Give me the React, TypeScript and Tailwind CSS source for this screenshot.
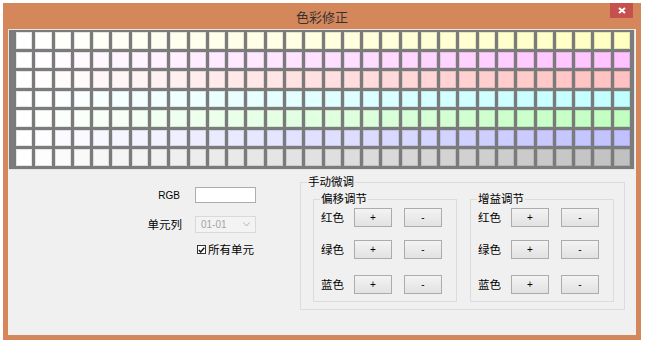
import React from 'react';

const cjk = "font-['Noto_Sans_CJK_SC','Microsoft_YaHei',sans-serif]";

// each row fades from white towards its tint, 2 steps per column
const rowTints: ((v: number) => string)[] = [
  (v) => `rgb(255,255,${v})`,
  (v) => `rgb(255,${v},255)`,
  (v) => `rgb(255,${v},${v})`,
  (v) => `rgb(${v},255,255)`,
  (v) => `rgb(${v},255,${v})`,
  (v) => `rgb(${v},${v},255)`,
  (v) => `rgb(${v},${v},${v})`,
];

const COLS = 32;

const AdjButton: React.FC<{ label: string; className?: string }> = ({ label, className = '' }) => (
  <button
    className={`h-[19px] w-[38px] border border-[#acacac] bg-linear-to-b from-[#f3f3f3] to-[#e2e2e2] text-[10px] leading-none text-black font-['Liberation_Sans',sans-serif] ${className}`}
  >
    {label}
  </button>
);

const GroupBox: React.FC<{ title: string; className?: string; children?: React.ReactNode }> = ({
  title,
  className = '',
  children,
}) => (
  <div className={`relative border border-[#dcdcdc] ${className}`}>
    <span className="absolute -top-[9px] left-[6px] bg-[#f0f0f0] px-px text-[11.5px] leading-[15px] text-black">
      {title}
    </span>
    {children}
  </div>
);

const AdjGroup: React.FC<{ title: string; className?: string }> = ({ title, className = '' }) => (
  <GroupBox title={title} className={`h-[103px] w-[144px] pl-[7px] pt-[8px] ${className}`}>
    {[
      { name: '红色', mt: '' },
      { name: '绿色', mt: 'mt-[13px]' },
      { name: '蓝色', mt: 'mt-[16px]' },
    ].map((row) => (
      <div key={row.name} className={`flex items-center ${row.mt}`}>
        <span className="w-[33px] text-[11.5px] leading-[15px] text-black">{row.name}</span>
        <AdjButton label="+" />
        <AdjButton label="-" className="ml-[12px]" />
      </div>
    ))}
  </GroupBox>
);

export default function App() {
  return (
    <div className={`h-[345px] w-[645px] bg-white pl-[3px] pt-[3px] ${cjk}`}>
      <div className="flex h-[337px] w-[638px] flex-col bg-[#d5875c]">
        {/* Title bar */}
        <div className="grid h-[26px] shrink-0 grid-cols-[1fr_auto_1fr]">
          <div />
          <div className="flex items-center pt-[2px] text-[13px] text-[#333]">色彩修正</div>
          <div className="flex justify-end pr-[8px]">
            <div className="flex h-[15px] w-[23px] items-center justify-center bg-[#c6504e]">
              <svg width="8" height="7" viewBox="0 0 8 7">
                <path d="M1 1 L7 6 M7 1 L1 6" stroke="white" strokeWidth="2" />
              </svg>
            </div>
          </div>
        </div>

        {/* Client area */}
        <div className="mx-[5px] mb-[5px] flex flex-1 flex-col bg-[#f0f0f0]">
          {/* Color swatch grid */}
          <div className="mr-px border border-[#e4e4e4] bg-[#7b7b7b] pb-[3px] pl-[7px] pr-[4px] pt-[2px]">
            <div className="grid h-[134px] grid-cols-32 grid-rows-7 gap-[3px]">
              {rowTints.map((tint, r) =>
                Array.from({ length: COLS }, (_, c) => (
                  <div
                    key={`${r}-${c}`}
                    className="border border-black/10"
                    style={{ backgroundColor: tint(255 - c * 2) }}
                  />
                ))
              )}
            </div>
          </div>

          {/* Controls */}
          <div className="flex items-start">
            <div className="ml-[138px] mt-[17px] w-[110px]">
              <div className="flex items-center">
                <span className="w-[34px] text-right font-['Liberation_Sans',sans-serif] text-[10px] text-black">
                  RGB
                </span>
                <div className="ml-[15px] h-[16px] w-[61px] border border-[#abadb3] bg-white" />
              </div>
              <div className="mt-[13px] flex items-center">
                <span className="w-[36px] text-right text-[11.5px] leading-[15px] text-black">单元列</span>
                <div className="ml-[13px] flex h-[17px] w-[61px] items-center justify-between border border-[#d9d9d9] bg-[#f3f3f3] pl-[5px] pr-[5px]">
                  <span className="font-['Liberation_Sans',sans-serif] text-[10px] text-[#a3a3a3]">01-01</span>
                  <svg width="7" height="5" viewBox="0 0 7 5">
                    <path d="M0.5 0.5 L3.5 4 L6.5 0.5" stroke="#b5b5b5" strokeWidth="1" fill="none" />
                  </svg>
                </div>
              </div>
              <div className="ml-[51px] mt-[9px] flex items-center">
                <div className="flex h-[9px] w-[9px] items-center justify-center border border-[#333] bg-white">
                  <svg width="7" height="6" viewBox="0 0 7 6">
                    <path d="M0.8 3 L2.7 5 L6.3 0.8" stroke="#111" strokeWidth="1.4" fill="none" />
                  </svg>
                </div>
                <span className="ml-[2px] text-[11.5px] leading-[15px] text-black">所有单元</span>
              </div>
            </div>

            <GroupBox title="手动微调" className="ml-[44px] mt-[12px] h-[128px] w-[325px] pl-[12px] pt-[16px]">
              <div className="flex gap-[13px]">
                <AdjGroup title="偏移调节" />
                <AdjGroup title="增益调节" />
              </div>
            </GroupBox>
          </div>
        </div>
      </div>
    </div>
  );
}
